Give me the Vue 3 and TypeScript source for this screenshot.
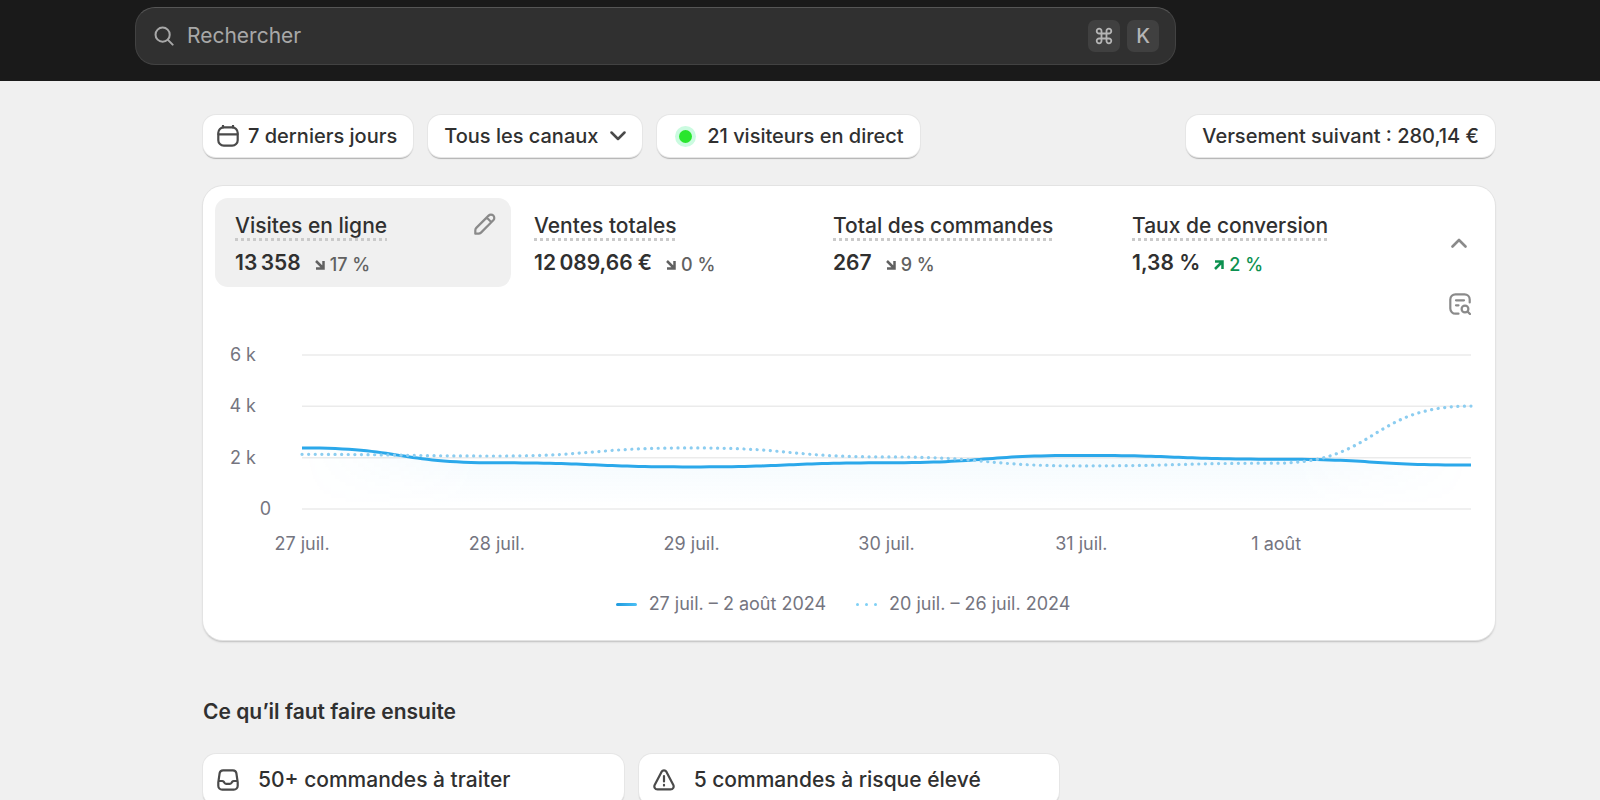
<script setup lang="ts">
import { computed, onBeforeUnmount, onMounted, ref } from 'vue'

interface Metric {
  id: string
  label: string
  value: string
  delta: string
  up: boolean
}

const metrics: Metric[] = [
  { id: 'visits', label: 'Visites en ligne', value: '13\u202f358', delta: '17 %', up: false },
  { id: 'sales', label: 'Ventes totales', value: '12\u202f089,66 €', delta: '0 %', up: false },
  { id: 'orders', label: 'Total des commandes', value: '267', delta: '9 %', up: false },
  { id: 'conversion', label: 'Taux de conversion', value: '1,38 %', delta: '2 %', up: true },
]
const active = ref('visits')
const channel = ref('all')
const query = ref('')

const days = ['27 juil.', '28 juil.', '29 juil.', '30 juil.', '31 juil.', '1 août']
const ticks = [
  { text: '6 k', unit: true },
  { text: '4 k', unit: true },
  { text: '2 k', unit: true },
  { text: '0', unit: false },
]

const current = [2380, 1800, 1640, 1800, 2088, 1940, 1710]
const previous = [2130, 2065, 2380, 2030, 1680, 1785, 4010]

const H = 154
const MAX = 6000
const TENSION = 0.52
const SAMPLES = 32

// The drawing is as wide as the space it is given
const plot = ref<HTMLElement | null>(null)
const width = ref(1168)
let observer: ResizeObserver | undefined

function measure() {
  if (plot.value) width.value = plot.value.clientWidth
}
onMounted(() => {
  measure()
  observer = new ResizeObserver(measure)
  if (plot.value) observer.observe(plot.value)
})
onBeforeUnmount(() => observer?.disconnect())

const toY = (v: number) => 1 + H - (v / MAX) * H

// Smooth curve with horizontal tangents at every day, sampled finely along each span
function curve(values: number[]): string {
  const step = width.value / (values.length - 1)
  const points = [`0 ${toY(values[0])}`]
  for (let i = 1; i < values.length; i++) {
    const from = toY(values[i - 1])
    const to = toY(values[i])
    for (let s = 1; s <= SAMPLES; s++) {
      const t = s / SAMPLES
      const u = 1 - t
      const fx = 3 * TENSION * t * u * u + 3 * (1 - TENSION) * t * t * u + t * t * t
      const fy = 3 * t * t * u + t * t * t
      points.push(`${((i - 1 + fx) * step).toFixed(2)} ${(from + (to - from) * fy).toFixed(2)}`)
    }
  }
  return `M${points.join('L')}`
}

const currentPath = computed(() => curve(current))
const previousPath = computed(() => curve(previous))
const areaPath = computed(() => `${currentPath.value}V${H}H0Z`)
</script>

<template>
  <div class="page">
    <header class="topbar">
      <label class="search">
        <svg class="search-icon" viewBox="0 0 22 22" aria-hidden="true">
          <circle cx="9.5" cy="9.5" r="7.8" />
          <path d="M15.300 15.300l5.200 5.200" />
        </svg>
        <input v-model="query" type="search" placeholder="Rechercher" aria-label="Rechercher" />
        <kbd>
          <svg viewBox="0 0 18 18" aria-label="Commande">
            <path d="M6.5 6.5h5v5h-5zM6.5 6.5H4.2a2.4 2.4 0 1 1 2.3-2.3zM11.5 6.5h2.3a2.4 2.4 0 1 0-2.3-2.3zM6.5 11.5H4.2a2.4 2.4 0 1 0 2.3 2.3zM11.5 11.5h2.3a2.4 2.4 0 1 1-2.3 2.3z" />
          </svg>
        </kbd>
        <kbd>K</kbd>
      </label>
    </header>

    <main class="content">
      <div class="filters">
        <button type="button" class="chip chip-date">
          <svg class="icon" viewBox="0 0 22 22" aria-hidden="true">
            <rect x="1.3" y="2.3" width="19.4" height="18.4" rx="5.500" />
            <path d="M1.5 9.3h19M6 .8v1.7M16 .8v1.7" />
          </svg>
          7 derniers jours
        </button>
        <label class="chip chip-select">
          <select v-model="channel" aria-label="Canal">
            <option value="all">Tous les canaux</option>
          </select>
          <svg viewBox="0 0 16 10" aria-hidden="true"><path d="M1.5 1.5L8 8l6.500-6.500" /></svg>
        </label>
        <button type="button" class="chip chip-live">
          <span class="live-dot"></span>
          21 visiteurs en direct
        </button>
        <button type="button" class="chip chip-payout">Versement suivant : 280,14 €</button>
      </div>

      <section class="card">
        <div class="metrics-row">
          <div class="metrics">
            <div v-for="m in metrics" :key="m.id" class="metric" :class="{ active: active === m.id }">
              <button type="button" class="metric-main" :aria-pressed="active === m.id" @click="active = m.id">
                <span class="metric-label">{{ m.label }}</span>
                <span class="metric-figures">
                  <span class="metric-value">{{ m.value }}</span>
                  <span class="delta" :class="{ up: m.up }">
                    <svg viewBox="0 0 10 10" aria-hidden="true">
                      <path v-if="m.up" d="M1 9L8 2M1 1.500H8.500V9" />
                      <path v-else d="M1 1L8 8M8.500 1V8.500H1" />
                    </svg>
                    {{ m.delta }}
                  </span>
                </span>
              </button>
              <button v-if="active === m.id" type="button" class="icon-button" aria-label="Modifier">
                <svg viewBox="0 0 22 22" aria-hidden="true">
                  <path d="M1.300 20.700v-3.300c0-1 .3-1.800 1-2.500L14.600 2.600a3.300 3.300 0 0 1 4.700 0 3.300 3.300 0 0 1 0 4.700L7 19.600c-.7.7-1.500 1.100-2.500 1.100zM12.700 4.500l4.700 4.700" />
                </svg>
              </button>
            </div>
          </div>
          <button type="button" class="collapse" aria-label="Réduire">
            <svg viewBox="0 0 16 10" aria-hidden="true"><path d="M1.500 8.500L8 2l6.500 6.500" /></svg>
          </button>
        </div>

        <div class="report-row">
          <button type="button" class="icon-button" aria-label="Voir le rapport">
            <svg viewBox="0 0 22 22" aria-hidden="true">
              <path d="M9.500 20.700H6.500a5.200 5.200 0 0 1-5.200-5.200V6.500A5.200 5.200 0 0 1 6.500 1.300h9A5.200 5.200 0 0 1 20.700 6.500v3M7 7.300h8M7 12.300h2.500" />
              <circle cx="16" cy="16" r="3.400" />
              <path d="M18.600 18.600l2.400 2.400" />
            </svg>
          </button>
        </div>

        <div class="chart">
          <div class="y-axis">
            <span v-for="t in ticks" :key="t.text" :class="{ unit: t.unit }">{{ t.text }}</span>
          </div>
          <div ref="plot" class="plot">
            <svg class="lines" :viewBox="`0 0 ${width} ${H + 2}`" role="img" aria-label="Visites en ligne par jour">
              <defs>
                <linearGradient id="fade" x1="0" y1="0" x2="0" y2="1">
                  <stop offset="0" stop-color="#2ba8ea" stop-opacity="0.060" />
                  <stop offset="1" stop-color="#2ba8ea" stop-opacity="0" />
                </linearGradient>
                <linearGradient id="sides" x1="0" y1="0" x2="1" y2="0">
                  <stop offset="0" stop-color="#000" />
                  <stop offset="0.150" stop-color="#fff" />
                  <stop offset="0.850" stop-color="#fff" />
                  <stop offset="1" stop-color="#000" />
                </linearGradient>
                <mask id="edge"><rect :width="width" :height="H" fill="url(#sides)" stroke="none" /></mask>
              </defs>
              <path v-for="v in [0, 2000, 4000, 6000]" :key="v" class="grid" :d="`M0 ${toY(v)}H${width}`" />
              <path :d="areaPath" fill="url(#fade)" stroke="none" mask="url(#edge)" />
              <path class="current" :d="currentPath" />
              <path class="previous" :d="previousPath" />
            </svg>
            <div class="x-axis">
              <span v-for="d in days" :key="d">{{ d }}</span>
            </div>
          </div>
        </div>

        <div class="legend">
          <span class="legend-item"><i class="swatch-solid"></i>27 juil. – 2 août 2024</span>
          <span class="legend-item"><i class="swatch-dots"><b></b><b></b><b></b></i>20 juil. – 26 juil. 2024</span>
        </div>
      </section>

      <h2>Ce qu’il faut faire ensuite</h2>
      <div class="tasks">
        <a href="#" class="task">
          <svg class="icon" viewBox="0 0 22 22" aria-hidden="true">
            <path d="M6.200 1.300h9.600a3.600 3.600 0 0 1 3.600 3l1.300 9v3.500a3.900 3.900 0 0 1-3.900 3.900H5.200a3.900 3.900 0 0 1-3.900-3.900v-3.500l1.300-9a3.600 3.600 0 0 1 3.600-3zM1.500 12h3.700c.7 0 1.200.3 1.600.8l.8 1.200c.4.600.9.800 1.600.8h3.600c.7 0 1.200-.2 1.600-.8l.8-1.200c.4-.5.9-.8 1.600-.8h3.700" />
          </svg>
          50+ commandes à traiter
        </a>
        <a href="#" class="task">
          <svg class="icon" viewBox="0 0 22 22" aria-hidden="true">
            <path d="M8.500 2.900a2.900 2.900 0 0 1 5 0l6.700 12.900c1.200 2.300-.2 4.600-2.700 4.600h-13c-2.500 0-3.900-2.300-2.700-4.600zM11 7v5.500M11 15.800v.8" />
          </svg>
          5 commandes à risque élevé
        </a>
      </div>
    </main>
  </div>
</template>

<style>
html,
body {
  background: #f0f0f0;
}
</style>

<style scoped>
.page {
  font-family: Inter, "Liberation Sans", sans-serif;
  color: #303030;
  font-size: 20px;
  line-height: 24px;
  height: 100vh;
  overflow: hidden;
}
.page *,
.page {
  box-sizing: border-box;
}
button,
input,
select,
kbd {
  font: inherit;
  color: inherit;
  border: 0;
  background: none;
  margin: 0;
  padding: 0;
}
button,
select {
  cursor: pointer;
}
svg {
  display: block;
  flex: none;
  fill: none;
  stroke: currentColor;
  stroke-width: 2.2;
  stroke-linecap: round;
  stroke-linejoin: round;
}
.topbar {
  background: #1a1a1a;
  height: 81px;
  padding: 7px 424px 16px 135px;
}
.search {
  display: flex;
  align-items: center;
  gap: 7px;
  height: 58px;
  padding: 0 16px 0 18px;
  background: #303030;
  border: 1px solid #424242;
  border-top-color: #565656;
  border-radius: 20px;
  color: #a8a8a8;
}
.search-icon {
  width: 20px;
  height: 20px;
  margin-right: 6px;
}
.search input {
  flex: 1;
  min-width: 0;
  outline: 0;
  font-size: 21px;
  line-height: 28px;
  appearance: none;
}
.search input::placeholder {
  color: #a8a8a8;
  opacity: 1;
}
kbd {
  display: flex;
  align-items: center;
  justify-content: center;
  width: 32px;
  height: 32px;
  border-radius: 7px;
  background: #404040;
  color: #b5b5b5;
  font-weight: 500;
}
kbd svg {
  width: 18px;
  height: 18px;
  stroke-width: 1.8;
}
.content {
  padding: 34px 105px 0 203px;
}
.icon {
  width: 22px;
  height: 22px;
  color: #4a4a4a;
}
.filters {
  display: flex;
  gap: 15px;
  margin-bottom: 29px;
}
.chip,
.task {
  display: flex;
  align-items: center;
  background: #fff;
  border-radius: 13px;
  box-shadow: 0 0 0 1px #e6e6e6, 0 2px 1px #b2b2b2;
  font-weight: 500;
}
.chip {
  height: 42px;
  white-space: nowrap;
}
.chip-date {
  gap: 9px;
  padding: 0 16px 0 14px;
}
.chip-select {
  display: grid;
  align-items: center;
}
.chip-select select {
  grid-area: 1 / 1;
  appearance: none;
  height: 42px;
  padding: 0 43px 0 16px;
  outline: 0;
  border-radius: 13px;
}
.chip-select svg {
  grid-area: 1 / 1;
  justify-self: end;
  width: 16px;
  height: 10px;
  margin-right: 16px;
  color: #4a4a4a;
  stroke-width: 2.5;
  pointer-events: none;
}
.chip-live {
  gap: 15px;
  padding: 0 16px 0 22px;
}
.live-dot {
  width: 13px;
  height: 13px;
  border-radius: 50%;
  background: #29e62d;
  box-shadow: 0 0 0 4px #cbfbe0;
}
.chip-payout {
  margin-left: auto;
  padding: 0 16px;
}
.card {
  background: #fff;
  border-radius: 20px;
  box-shadow: 0 0 0 1px #e3e3e3, 0 2px 2px #bdbdbd;
  padding: 12px 24px 24px 12px;
}
.metrics-row {
  display: flex;
  align-items: center;
}
.metrics {
  flex: 1;
  display: grid;
  grid-template-columns: repeat(4, 1fr);
  gap: 3px;
}
.metric {
  display: flex;
  align-items: flex-start;
  padding: 15px 15px 10px 20px;
  border-radius: 13px;
}
.metric.active {
  background: #f0f0f0;
}
.metric-main {
  flex: 1;
  text-align: left;
  white-space: nowrap;
}
.metric-label {
  display: inline-block;
  font-size: 21px;
  line-height: 26px;
  font-weight: 500;
  padding-bottom: 2px;
  background: repeating-linear-gradient(90deg, #cacaca 0 3px, transparent 3px 6px) left bottom / 100% 3px no-repeat;
}
.metric-figures {
  display: flex;
  align-items: center;
  gap: 14px;
  margin-top: 8px;
}
.metric-value {
  font-size: 21px;
  line-height: 28px;
  font-weight: 600;
}
.delta {
  display: flex;
  align-items: center;
  gap: 5px;
  padding-top: 4px;
  font-size: 18px;
  font-weight: 500;
  color: #616161;
}
.delta svg {
  width: 10px;
  height: 10px;
  stroke-width: 2.5;
  stroke-linecap: butt;
  stroke-linejoin: miter;
}
.delta.up {
  color: #0c9150;
}
.icon-button {
  color: #8a8a8a;
}
.icon-button svg {
  width: 22px;
  height: 22px;
}
.collapse {
  margin: 0 4px 0 43px;
  color: #8a8a8a;
}
.collapse svg {
  width: 16px;
  height: 10px;
  stroke-width: 2.6;
}
.report-row {
  display: flex;
  justify-content: flex-end;
  padding-top: 6px;
}
.chart {
  display: flex;
  margin-top: 28px;
  color: #75757f;
  font-size: 18px;
  line-height: 24px;
}
.y-axis {
  display: flex;
  flex-direction: column;
  justify-content: space-between;
  width: 56px;
  height: 178px;
  margin-right: 31px;
  text-align: right;
}
.y-axis .unit {
  padding-right: 15px;
}
.plot {
  flex: 1;
  min-width: 0;
  padding-top: 11px;
}
.lines {
  width: 100%;
  height: 156px;
  overflow: visible;
}
.grid {
  stroke: #ebebeb;
  stroke-width: 1.5;
  stroke-linecap: butt;
}
.current {
  stroke: #2ba8ea;
  stroke-width: 3;
  stroke-linecap: butt;
}
.previous {
  stroke: #8ccdf0;
  stroke-width: 3.2;
  stroke-dasharray: 0.1 6.5;
}
.x-axis {
  display: grid;
  grid-template-columns: repeat(6, 1fr);
  margin: 22px calc(100% / 12) 0 calc(-100% / 12);
  text-align: center;
}
.legend {
  display: flex;
  justify-content: center;
  gap: 30px;
  margin-top: 36px;
  color: #75757f;
  font-size: 18px;
  line-height: 24px;
}
.legend-item {
  display: flex;
  align-items: center;
  gap: 12px;
}
.swatch-solid {
  width: 21px;
  height: 3px;
  border-radius: 2px;
  background: linear-gradient(90deg, #1e9ade, #4cc0f5);
}
.swatch-dots {
  display: flex;
  justify-content: space-between;
  width: 21px;
}
.swatch-dots b {
  width: 3px;
  height: 3px;
  border-radius: 50%;
  background: #7fd0f5;
}
h2 {
  margin: 60px 0 30px;
  font-size: 21px;
  line-height: 24px;
  font-weight: 600;
}
.tasks {
  display: grid;
  grid-template-columns: repeat(3, 1fr);
  gap: 15px;
}
.task {
  height: 51px;
  padding: 0 14px;
  gap: 19px;
  font-size: 21px;
  color: #303030;
  text-decoration: none;
}
</style>
